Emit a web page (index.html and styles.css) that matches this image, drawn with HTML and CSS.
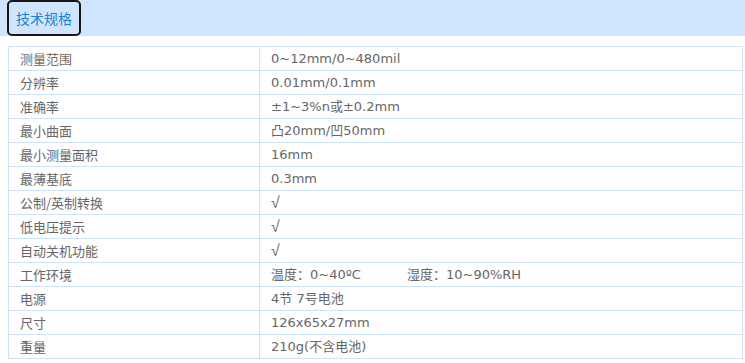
FILE: index.html
```html
<!DOCTYPE html>
<html lang="zh">
<head>
<meta charset="utf-8">
<title>技术规格</title>
<link rel="stylesheet" href="styles.css">
</head>
<body>
<div class="header">
  <div class="tab">技术规格</div>
</div>
<table class="spec">
  <tr><td class="k first">测量范围</td><td>0~12mm/0~480mil</td></tr>
  <tr><td class="k">分辨率</td><td>0.01mm/0.1mm</td></tr>
  <tr><td class="k">准确率</td><td>±1~3%n或±0.2mm</td></tr>
  <tr><td class="k">最小曲面</td><td>凸20mm/凹50mm</td></tr>
  <tr><td class="k">最小测量面积</td><td>16mm</td></tr>
  <tr><td class="k">最薄基底</td><td>0.3mm</td></tr>
  <tr><td class="k">公制/英制转换</td><td class="check">√</td></tr>
  <tr><td class="k">低电压提示</td><td class="check">√</td></tr>
  <tr><td class="k">自动关机功能</td><td class="check">√</td></tr>
  <tr><td class="k">工作环境</td><td><span class="temp">温度：0~40ºC</span><span>湿度：10~90%RH</span></td></tr>
  <tr><td class="k">电源</td><td>4节 7号电池</td></tr>
  <tr><td class="k">尺寸</td><td>126x65x27mm</td></tr>
  <tr><td class="k">重量</td><td>210g(不含电池)</td></tr>
</table>
</body>
</html>
```
FILE: styles.css
```css
html, body {
  margin: 0;
  padding: 0;
  background: #ffffff;
}
body {
  font-family: "DejaVu Sans", "Noto Sans CJK SC", sans-serif;
  font-size: 13px;
  color: #666666;
}
.header {
  background: #cfe5fd;
  height: 36px;
  display: flex;
  align-items: flex-start;
  padding-left: 7px;
}
.tab {
  box-sizing: border-box;
  height: 36px;
  width: 74px;
  border: 2px solid #151515;
  border-radius: 5px;
  display: flex;
  align-items: center;
  justify-content: center;
  color: #1a82d2;
  font-family: "Noto Sans CJK SC", sans-serif;
  font-size: 14px;
  padding-bottom: 1px;
}
.spec {
  border-collapse: collapse;
  margin: 10px 0 0 8px;
  width: 735px;
}
.spec td {
  border: 1px solid #cde3fb;
  height: 23px;
  padding: 0 0 0 11px;
  line-height: 23px;
  white-space: nowrap;
}
.spec td.k {
  width: 239px;
  padding-left: 11px;
  font-family: "Noto Sans CJK SC", sans-serif;
}
.spec td.first {
  color: #7a6a5a;
}
.spec td.check {
  font-family: "Liberation Sans", sans-serif;
  font-size: 16px;
}
.temp {
  display: inline-block;
  width: 136px;
}
```
